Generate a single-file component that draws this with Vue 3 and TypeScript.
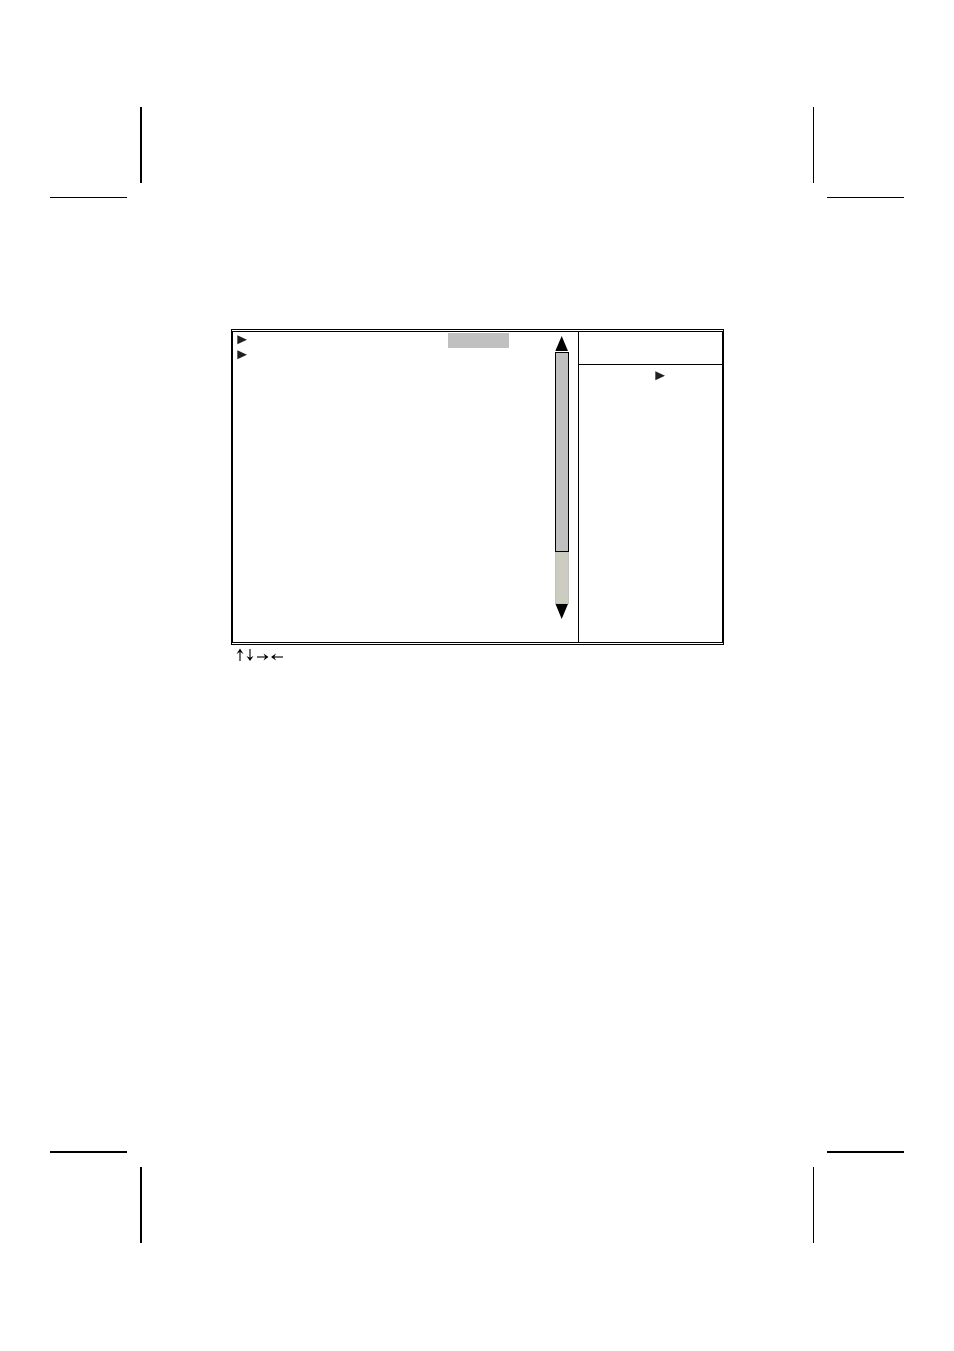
<script setup lang="ts">
interface Item { id: number; selected: boolean }
interface NavKey { name: string; stem: string; head: string }

const items: Item[] = [
  { id: 1, selected: true },
  { id: 2, selected: false },
]
const navKeys: NavKey[] = [
  { name: 'up', stem: 'M6 13V3', head: 'M6 0.5L9.5 6L6 3.8L2.5 6Z' },
  { name: 'down', stem: 'M6 1V11', head: 'M6 13L2.5 8L6 9.8L9.5 8Z' },
  { name: 'right', stem: 'M1 9H10', head: 'M12.5 9L7.5 5.5L9.3 9L7.5 12.5Z' },
  { name: 'left', stem: 'M13 9H4', head: 'M1 9L6 5.5L4.2 9L6 12.5Z' },
]
</script>

<template>
  <div class="page">
    <div class="marks">
      <div class="corner start"><i class="vertical thick"></i><i class="horizontal"></i></div>
      <div class="corner end"><i class="vertical"></i><i class="horizontal"></i></div>
    </div>

    <main class="setup">
      <div class="frame">
        <div class="panel">
          <section class="options">
            <ul class="list">
              <li v-for="item in items" :key="item.id" class="row">
                <svg class="pointer" viewBox="0 0 10 10" aria-hidden="true"><path d="M0.3 0.3L10 4.8L0.3 9.3Z" /></svg>
                <span class="value" :class="{ selected: item.selected }"></span>
              </li>
            </ul>
            <div class="scrollbar">
              <button class="step" type="button" aria-label="Scroll up">
                <svg viewBox="0 0 14 15" aria-hidden="true"><path d="M6.7 0L13 15H0.3Z" /></svg>
              </button>
              <div class="track"><div class="thumb"></div></div>
              <button class="step" type="button" aria-label="Scroll down">
                <svg viewBox="0 0 14 15" aria-hidden="true"><path d="M0.5 0H13L6.7 15Z" /></svg>
              </button>
            </div>
          </section>
          <aside class="help">
            <div class="help-title"></div>
            <div class="help-body">
              <svg class="pointer" viewBox="0 0 10 10" aria-hidden="true"><path d="M0.3 0.3L10 4.8L0.3 9.3Z" /></svg>
            </div>
          </aside>
        </div>
      </div>
      <div class="keys">
        <svg v-for="key in navKeys" :key="key.name" :class="['key', key.name]" viewBox="0 0 14 14" role="img" :aria-label="key.name">
          <path class="stem" :d="key.stem" />
          <path class="head" :d="key.head" />
        </svg>
      </div>
    </main>

    <div class="marks">
      <div class="corner start"><i class="horizontal thick"></i><i class="vertical thick"></i></div>
      <div class="corner end"><i class="horizontal thick"></i><i class="vertical"></i></div>
    </div>
  </div>
</template>

<style>
body {
  margin: 0;
  background: #fff;
}
</style>

<style scoped>
.page {
  box-sizing: border-box;
  min-height: 100vh;
  padding: 107px 50px 108px;
  display: flex;
  flex-direction: column;
  font-family: "Liberation Sans", sans-serif;
}
.marks {
  display: flex;
  justify-content: space-between;
}
.corner {
  display: flex;
  flex-direction: column;
  align-items: flex-start;
  gap: 14px;
}
.start {
  width: 92px;
}
.end {
  width: 91px;
}
.start .vertical,
.end .horizontal {
  align-self: flex-end;
}
.vertical {
  width: 1px;
  height: 76px;
  background: #000;
}
.vertical.thick {
  width: 2px;
}
.horizontal {
  width: 77px;
  height: 1px;
  background: #000;
}
.horizontal.thick {
  height: 2px;
}
.setup {
  flex: 1;
  margin: 131px 180px 0 181px;
}
.frame {
  border: 1px solid #000;
  padding: 1px 0;
}
.panel {
  display: grid;
  grid-template-columns: 1fr 144px;
  min-height: 310px;
  border: 1px solid #000;
}
.options {
  display: flex;
  justify-content: space-between;
  padding: 1px 9px 23px 4px;
}
.list {
  flex: 1;
  margin: 0;
  padding: 0;
  list-style: none;
}
.row {
  display: flex;
  justify-content: space-between;
  align-items: flex-start;
  height: 15px;
}
.row .pointer {
  padding-top: 2px;
}
.value {
  width: 61px;
  height: 15px;
  margin-right: 46px;
}
.selected {
  background: #c0c0c0;
}
.pointer {
  display: block;
  width: 10px;
  height: 10px;
  fill: #231f20;
}
.scrollbar {
  display: flex;
  flex-direction: column;
  width: 14px;
  padding-top: 3px;
}
.step {
  display: block;
  width: 14px;
  height: 15px;
  padding: 0;
  border: 0;
  background: none;
}
.step svg {
  display: block;
  width: 14px;
  height: 15px;
}
.track {
  box-sizing: border-box;
  flex: 1;
  margin-top: 1px;
  background: #ccccc0;
  box-shadow: inset 0 0 0 1px #c0c0c0;
}
.thumb {
  box-sizing: border-box;
  height: 200px;
  border: 1px solid #000;
  background: #c0c0c0;
}
.help {
  border-left: 1px solid #000;
}
.help-title {
  height: 32px;
  border-bottom: 1px solid #000;
}
.help-body {
  display: flex;
  justify-content: center;
  padding: 6px 0 0 18px;
}
.keys {
  display: flex;
  padding: 3px 0 0 3px;
}
.key {
  width: 14px;
  height: 14px;
}
.key.up {
  margin-right: -4px;
}
.key.down {
  margin-right: -2px;
}
.stem {
  fill: none;
  stroke: #333;
  stroke-width: 1.4;
}
.head {
  fill: #000;
}
</style>
